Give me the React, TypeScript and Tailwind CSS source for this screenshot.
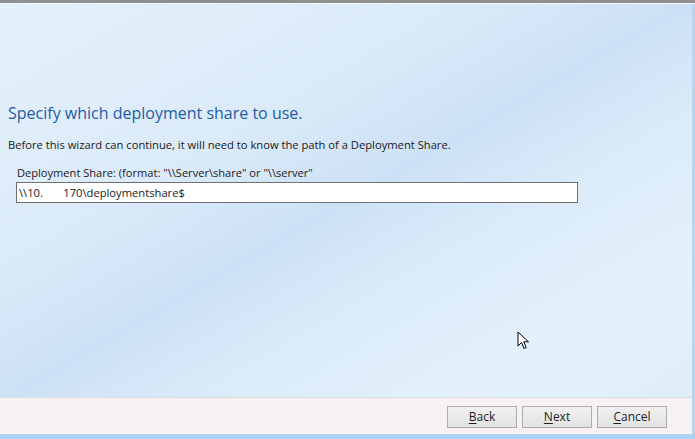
import { useState } from 'react';

function WizardButton({ label, hotkey }: { label: string; hotkey: string }) {
  const rest = label.slice(1);
  return (
    <button
      className="w-[70px] h-[22px] border border-[#adadad] bg-[linear-gradient(#f0f0f0,#e3e3e3)] text-[12px] text-[#1e1e1e] leading-none flex items-center justify-center"
    >
      <span>
        <span className="underline underline-offset-2">{hotkey}</span>
        {rest}
      </span>
    </button>
  );
}

function Cursor() {
  return (
    <svg className="absolute left-[517px] top-[331px]" width="13" height="20" viewBox="0 0 13 20">
      <path d="M1 1 L1 15 L4.5 11.5 L7 17.5 L9.2 16.6 L6.8 10.8 L11.5 10.8 Z" fill="#fff" stroke="#000" strokeWidth="1" strokeLinejoin="miter" />
    </svg>
  );
}

export default function App() {
  const [share, setShare] = useState('\\\\10.       170\\deploymentshare$');

  return (
    <div
      className="relative w-[695px] h-[439px] overflow-hidden flex flex-col"
      style={{ fontFamily: '"Open Sans", "Noto Sans", sans-serif' }}
    >
      <div className="h-[3px] bg-[#8f8f8f]" />
      <div className="h-px bg-[#f4f8fb]" />
      <div className="flex flex-1 min-h-0">
        <div className="flex-1 flex flex-col bg-[linear-gradient(150deg,#e4f1fb_0%,#dcebf9_30%,#cde1f6_48%,#dbebf9_62%,#e4f1fb_80%,#ddedf9_100%)]">
          <div className="flex-1 px-[8px] pt-[98px]">
            <h1 className="text-[16px] leading-[22px] text-[#1f5ba6]">Specify which deployment share to use.</h1>
            <p className="mt-[13px] text-[11.2px] leading-[16px] text-[#1a1a1a]">
              Before this wizard can continue, it will need to know the path of a Deployment Share.
            </p>
            <div className="ml-[8px] mt-[13px] w-[562px]">
              <label className="block text-[11.1px] leading-[14px] text-[#1a1a1a] pl-px">
                Deployment Share: (format: "\\Server\share" or "\\server"
              </label>
              <input
                value={share}
                onChange={(e) => setShare(e.target.value)}
                className="block w-full h-[21px] mt-[2px] border border-[#707070] bg-white px-[2px] text-[11.2px] text-[#1a1a1a] outline-none whitespace-pre"
              />
            </div>
          </div>
          <div className="h-[37px] border-t border-[#dcdcdc] bg-[#f7f1f4] flex items-center justify-end gap-[5px] pr-[25px] pt-[1px]">
            <WizardButton label="Back" hotkey="B" />
            <WizardButton label="Next" hotkey="N" />
            <WizardButton label="Cancel" hotkey="C" />
          </div>
        </div>
        <div className="w-[3px] bg-[#b7d5ef]" />
      </div>
      <div className="h-[5px] bg-[#acd2f3]" />
      <Cursor />
    </div>
  );
}
